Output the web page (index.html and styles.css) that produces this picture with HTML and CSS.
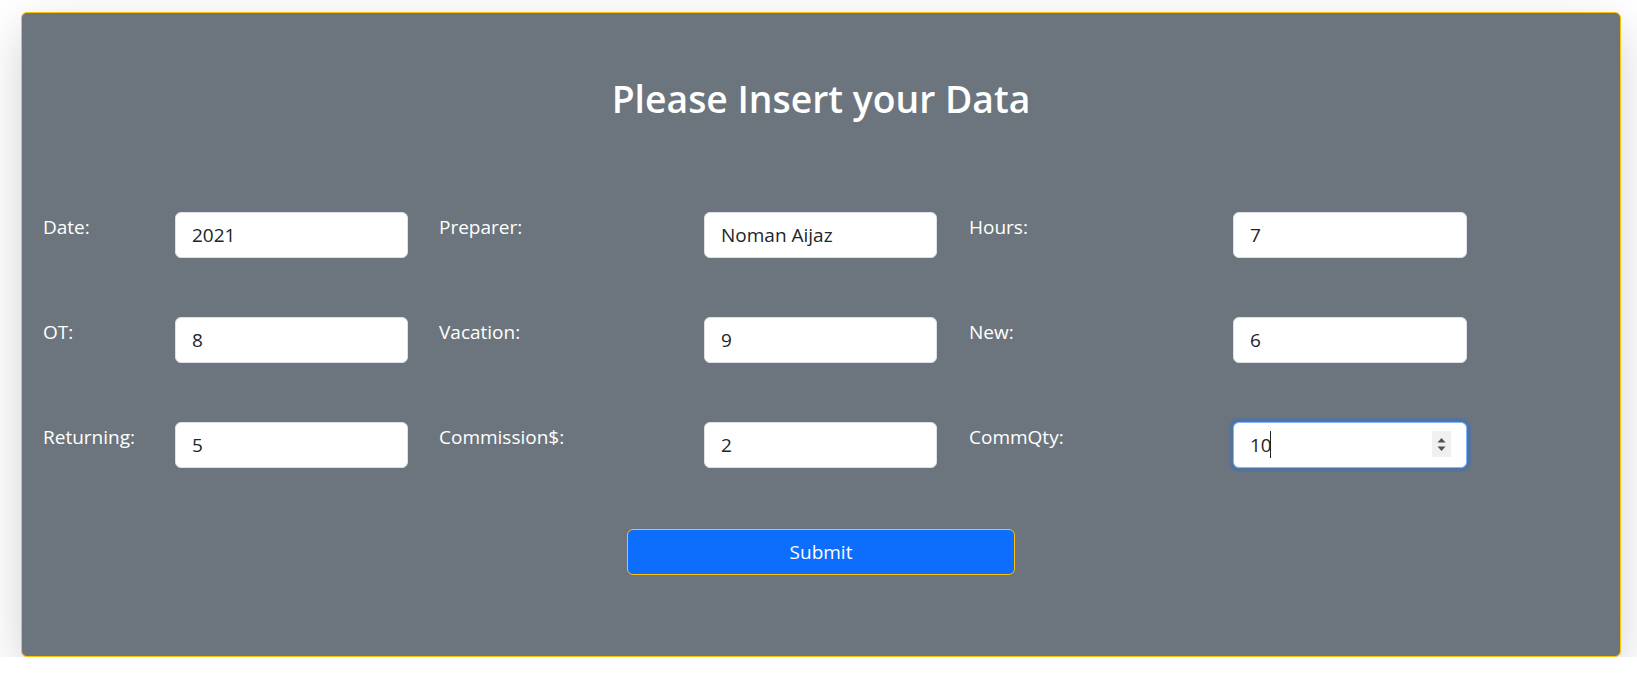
FILE: index.html
```html
<!DOCTYPE html>
<html lang="en">
<head>
<meta charset="utf-8">
<title>Insert Data</title>
<link rel="stylesheet" href="styles.css">
</head>
<body>
<div class="page">
  <div class="card">
    <h1 class="title">Please Insert your Data</h1>
    <form class="form">
      <div class="grid">
        <label class="lbl">Date:</label>
        <div class="cell"><input class="field" type="text" value="2021"></div>
        <label class="lbl">Preparer:</label>
        <div class="cell"><input class="field" type="text" value="Noman Aijaz"></div>
        <label class="lbl">Hours:</label>
        <div class="cell"><input class="field" type="text" value="7"></div>

        <label class="lbl">OT:</label>
        <div class="cell"><input class="field" type="text" value="8"></div>
        <label class="lbl">Vacation:</label>
        <div class="cell"><input class="field" type="text" value="9"></div>
        <label class="lbl">New:</label>
        <div class="cell"><input class="field" type="text" value="6"></div>

        <label class="lbl">Returning:</label>
        <div class="cell"><input class="field" type="text" value="5"></div>
        <label class="lbl">Commission$:</label>
        <div class="cell"><input class="field" type="text" value="2"></div>
        <label class="lbl">CommQty:</label>
        <div class="cell">
          <input class="field field-focus" type="number" value="10">
          <span class="caret"></span>
          <span class="spin">
            <svg width="11" height="17" viewBox="0 0 11 17"><path d="M1.5 6.5 L5.5 2 L9.5 6.5 Z" fill="#505050"/><path d="M1.5 10.5 L5.5 15 L9.5 10.5 Z" fill="#505050"/></svg>
          </span>
        </div>
      </div>
      <div class="actions">
        <button class="btn" type="button">Submit</button>
      </div>
    </form>
  </div>
</div>
</body>
</html>
```

FILE: styles.css
```css
* { box-sizing: border-box; }

html, body {
  margin: 0;
  padding: 0;
  background: #ffffff;
  font-family: "Open Sans", "Noto Sans", sans-serif;
}

.page {
  padding: 12px 16px 0 21px;
}

.card {
  height: 645px;
  background: #6c757d;
  border: 1px solid #ffc107;
  border-radius: 6px;
  box-shadow: 0 16px 48px rgba(0, 0, 0, 0.175);
  padding-top: 62px;
}

.title {
  margin: 0;
  text-align: center;
  color: #ffffff;
  font-size: 37.3px;
  font-weight: 600;
  line-height: 48px;
}

.form {
  margin-top: 89px;
}

.grid {
  display: grid;
  grid-template-columns: 132px 233px 296px 233px 296px 234px;
  grid-auto-rows: 46px;
  row-gap: 59px;
  padding-left: 21px;
}

.lbl {
  color: #ffffff;
  font-size: 19px;
  line-height: 30px;
  align-self: start;
}

.grid .lbl:nth-child(6n+3) { padding-left: 31px; }
.grid .lbl:nth-child(6n+5) { padding-left: 32px; }

.cell {
  position: relative;
}

.field {
  display: block;
  width: 100%;
  height: 46px;
  margin: 0;
  padding: 0 16px;
  font-family: inherit;
  font-size: 19px;
  color: #212529;
  background: #ffffff;
  border: 1px solid #dee2e6;
  border-radius: 6px;
  outline: none;
}

.field-focus {
  border-color: #86b7fe;
  box-shadow: 0 0 0 4px rgba(13, 110, 253, 0.25);
  -moz-appearance: textfield;
}

.field-focus::-webkit-inner-spin-button,
.field-focus::-webkit-outer-spin-button {
  -webkit-appearance: none;
  margin: 0;
}

.caret {
  position: absolute;
  left: 37px;
  top: 9px;
  width: 1px;
  height: 27px;
  background: #212529;
}

.spin {
  position: absolute;
  right: 16px;
  top: 9px;
  width: 19px;
  height: 26px;
  background: #f0f0f0;
  display: flex;
  align-items: center;
  justify-content: center;
}

.actions {
  display: flex;
  justify-content: center;
  margin-top: 61px;
}

.btn {
  width: 388px;
  height: 46px;
  background: #0d6efd;
  color: #ffffff;
  border: 1px solid #ffc107;
  border-radius: 6px;
  font-family: inherit;
  font-size: 19px;
  cursor: pointer;
}
```
